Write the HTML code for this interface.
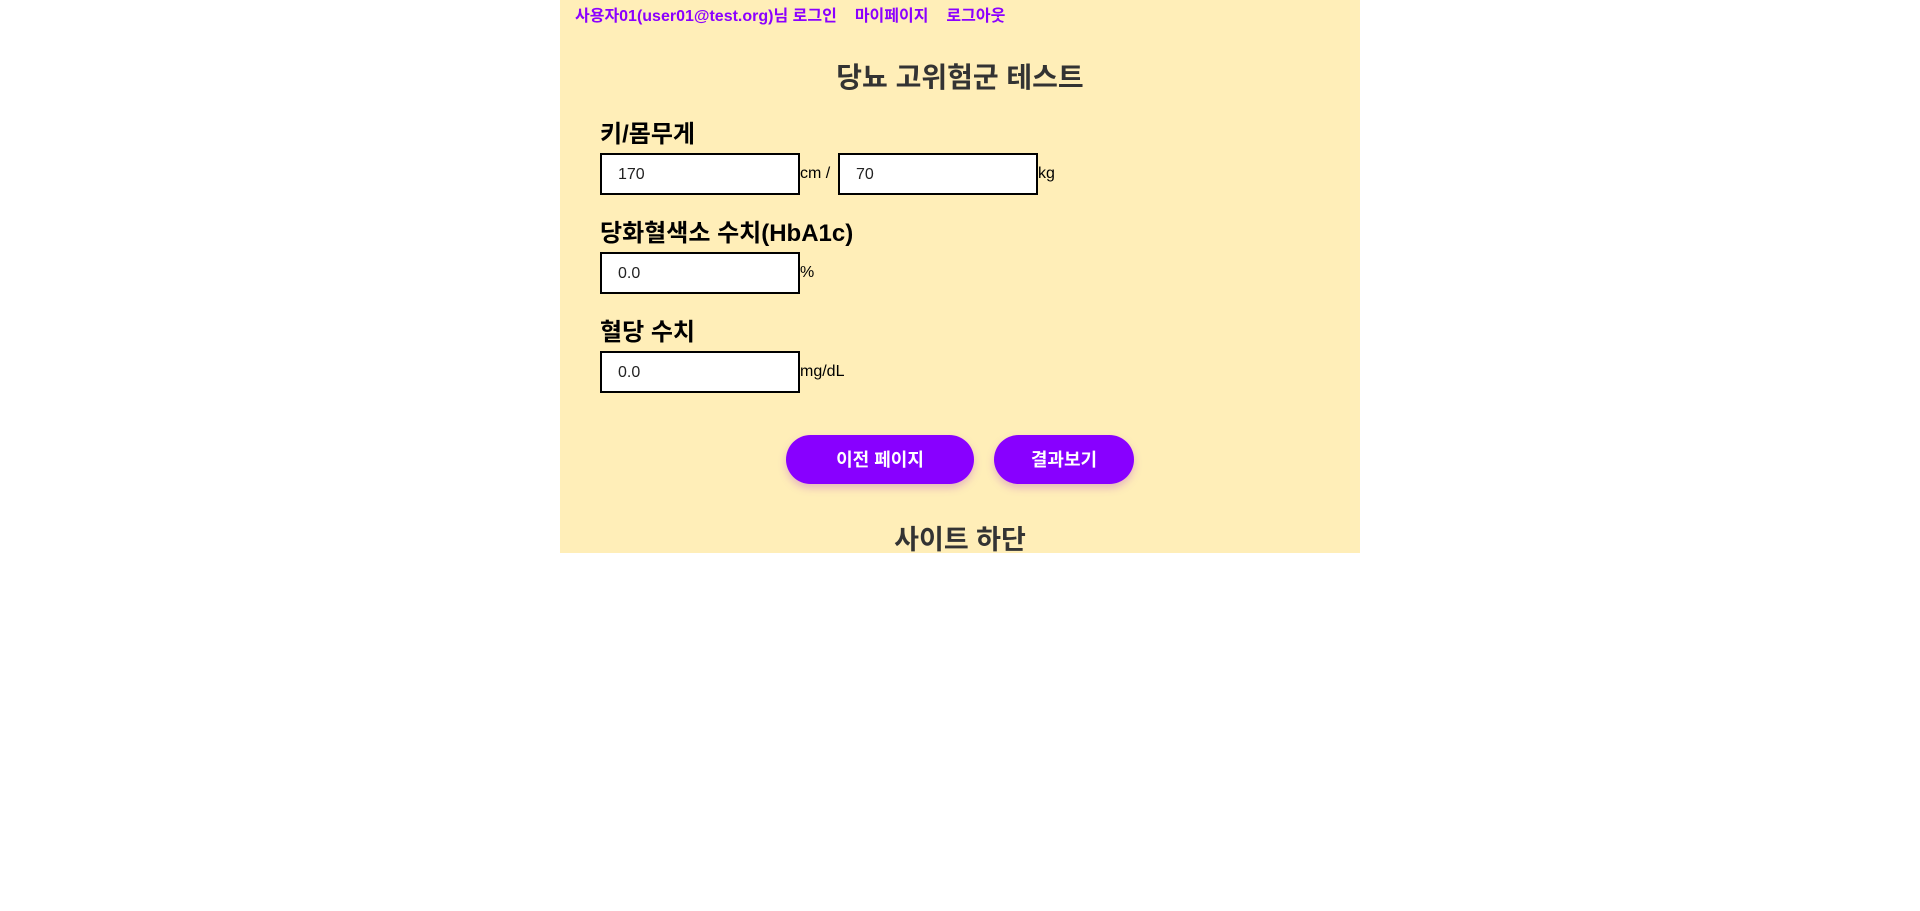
<!DOCTYPE html>
<html><head><meta charset="utf-8"><style>
*{margin:0;padding:0;box-sizing:border-box}
body{width:1920px;height:911px;background:#fff;font-family:"Liberation Sans","Noto Sans CJK KR",sans-serif;position:relative}
.wrap{position:absolute;left:560px;top:0;width:800px;height:553px;background:#ffeeb8}
.a{position:absolute;white-space:nowrap}
.top{left:15px;top:2px;font-size:16px;font-weight:bold;color:#8b00ff}
.top span{margin-right:18px}
h1{position:absolute;left:0;width:800px;text-align:center;top:56px;font-size:28px;color:#333}
.lab{left:40px;font-size:24px;font-weight:bold;color:#000}
.in{position:absolute;width:200px;height:42px;border:2px solid #000;background:#fff;font-size:16px;padding-left:16px;line-height:40px;color:#222}
.u{font-size:16px;color:#000}
.btn{position:absolute;top:435px;height:49px;border-radius:25px;background:#8800ff;color:#fff;font-weight:bold;font-size:18px;text-align:center;line-height:50px;box-shadow:0 4px 8px rgba(180,80,200,.35)}
.foot{left:0;width:800px;text-align:center;top:518px;font-size:27px;font-weight:bold;color:#333}
</style></head><body>
<div class="wrap">
<div class="a top"><span>사용자01(user01@test.org)님 로그인</span><span>마이페이지</span><span>로그아웃</span></div>
<h1>당뇨 고위험군 테스트</h1>
<div class="a lab" style="top:114px">키/몸무게</div>
<div class="in" style="left:40px;top:153px">170</div>
<div class="a u" style="left:240px;top:165px">cm /</div>
<div class="in" style="left:278px;top:153px">70</div>
<div class="a u" style="left:478px;top:165px">kg</div>
<div class="a lab" style="top:213px">당화혈색소 수치(HbA1c)</div>
<div class="in" style="left:40px;top:252px">0.0</div>
<div class="a u" style="left:240px;top:264px">%</div>
<div class="a lab" style="top:312px">혈당 수치</div>
<div class="in" style="left:40px;top:351px">0.0</div>
<div class="a u" style="left:240px;top:363px">mg/dL</div>
<div class="btn" style="left:226px;width:188px">이전 페이지</div>
<div class="btn" style="left:434px;width:140px">결과보기</div>
<div class="a foot">사이트 하단</div>
</div>
</body></html>
